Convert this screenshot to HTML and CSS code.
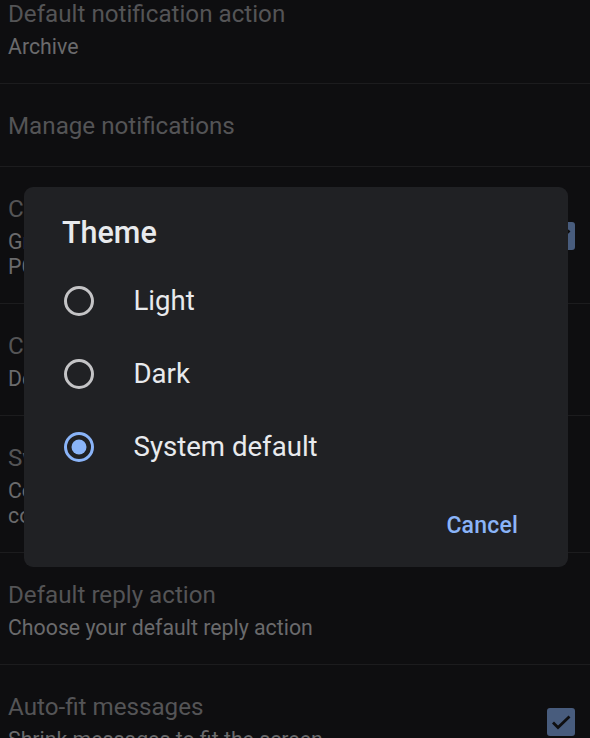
FILE: index.html
```html
<!DOCTYPE html>
<html lang="en">
<head>
<meta charset="utf-8">
<title>Theme</title>
<link rel="stylesheet" href="styles.css">
</head>
<body>
<div class="screen">
  <div class="list">
    <div class="row">
      <div class="row-text">
        <div class="title">Default notification action</div>
        <div class="sub">Archive</div>
      </div>
    </div>
    <div class="row">
      <div class="row-text">
        <div class="title">Manage notifications</div>
      </div>
    </div>
    <div class="row">
      <div class="row-text">
        <div class="title">Conversation view</div>
        <div class="sub">Group emails with the same topic together for IMAP,<br>POP3 and Exchange</div>
      </div>
      <div class="check"><svg viewBox="0 0 28 28" width="28" height="28"><path d="M6 14.5l5 5L22.5 8.5" fill="none" stroke="#0f0f11" stroke-width="2.8"/></svg></div>
    </div>
    <div class="row">
      <div class="row-text">
        <div class="title">Conversation list density</div>
        <div class="sub">Default</div>
      </div>
    </div>
    <div class="row">
      <div class="row-text">
        <div class="title">Swipe actions</div>
        <div class="sub">Configure swipe actions to quickly take action on<br>conversations in the list</div>
      </div>
    </div>
    <div class="row">
      <div class="row-text">
        <div class="title">Default reply action</div>
        <div class="sub">Choose your default reply action</div>
      </div>
    </div>
    <div class="row">
      <div class="row-text">
        <div class="title">Auto-fit messages</div>
        <div class="sub">Shrink messages to fit the screen</div>
      </div>
      <div class="check"><svg viewBox="0 0 28 28" width="28" height="28"><path d="M6 14.5l5 5L22.5 8.5" fill="none" stroke="#0f0f11" stroke-width="2.8"/></svg></div>
    </div>
  </div>

  <div class="dialog">
    <div class="dialog-title">Theme</div>
    <div class="options">
      <div class="option">
        <svg class="radio" viewBox="0 0 34 34" width="34" height="34"><circle cx="17" cy="17" r="13.5" fill="none" stroke="#c4c4c6" stroke-width="3"/></svg>
        <span class="label">Light</span>
      </div>
      <div class="option">
        <svg class="radio" viewBox="0 0 34 34" width="34" height="34"><circle cx="17" cy="17" r="13.5" fill="none" stroke="#c4c4c6" stroke-width="3"/></svg>
        <span class="label">Dark</span>
      </div>
      <div class="option">
        <svg class="radio" viewBox="0 0 34 34" width="34" height="34"><circle cx="17" cy="17" r="13.5" fill="none" stroke="#8ab4f8" stroke-width="3"/><circle cx="17" cy="17" r="7.5" fill="#8ab4f8"/></svg>
        <span class="label">System default</span>
      </div>
    </div>
    <div class="actions">
      <span class="btn">Cancel</span>
    </div>
  </div>
</div>
</body>
</html>
```

FILE: styles.css
```css
html, body {
  margin: 0;
  padding: 0;
}
body {
  background: #0e0e10;
  font-family: Roboto, "Noto Sans", "Liberation Sans", sans-serif;
  width: 590px;
  height: 738px;
  overflow: hidden;
}
.screen {
  position: relative;
  width: 590px;
  height: 738px;
  overflow: hidden;
}
.list {
  margin-top: -28px;
  display: flex;
  flex-direction: column;
}
.row {
  display: flex;
  align-items: center;
  padding: 26px 15px 24px 8px;
  border-bottom: 1px solid #1c1c1e;
}
.row-text {
  flex: 1;
  min-width: 0;
}
.title {
  font-size: 24.2px;
  line-height: 32px;
  color: #545456;
  white-space: nowrap;
}
.sub {
  margin-top: 4px;
  font-size: 21.3px;
  line-height: 25px;
  color: #6a6a6c;
  white-space: nowrap;
}
.check {
  width: 28px;
  height: 28px;
  border-radius: 3px;
  background: #485c7d;
  flex: none;
}
.check svg {
  display: block;
}
.dialog {
  position: absolute;
  left: 24px;
  top: 187px;
  width: 544px;
  height: 380px;
  box-sizing: border-box;
  background: #202124;
  border-radius: 9px;
  padding: 28px 50px 0 38px;
  display: flex;
  flex-direction: column;
}
.dialog-title {
  font-size: 30.5px;
  line-height: 36px;
  font-weight: 500;
  color: #e8eaed;
  margin-bottom: 13px;
}
.options {
  display: flex;
  flex-direction: column;
}
.option {
  height: 73px;
  display: flex;
  align-items: center;
  gap: 37.5px;
}
.radio {
  flex: none;
  display: block;
}
.label {
  font-size: 27.6px;
  color: #e8eaed;
}
.actions {
  margin-top: 18px;
  height: 48px;
  display: flex;
  align-items: center;
  justify-content: flex-end;
}
.btn {
  font-size: 23px;
  font-weight: 500;
  color: #8ab4f8;
  letter-spacing: 0.2px;
}
```
